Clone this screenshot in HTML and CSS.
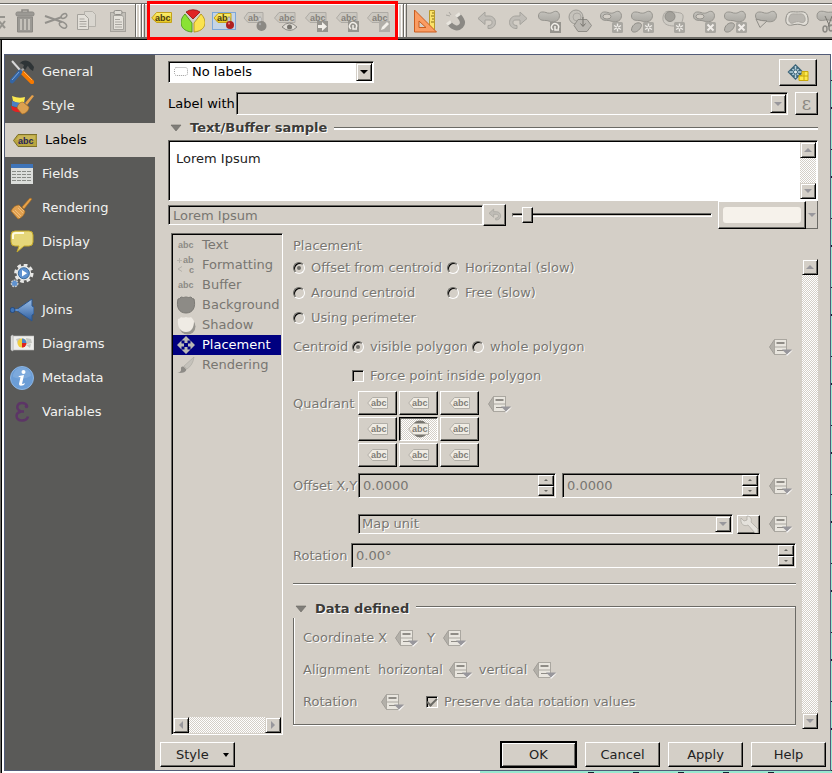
FILE: index.html
```html
<!DOCTYPE html>
<html lang="en">
<head>
<meta charset="utf-8">
<title>Layer Properties</title>
<link rel="stylesheet" href="styles.css">
</head>
<body>
<svg class="defs" aria-hidden="true">
  <defs>
    <linearGradient id="g-blue" x1="0" y1="0" x2="0" y2="1"><stop offset="0" stop-color="#9cbfe8"/><stop offset="1" stop-color="#2c5c9e"/></linearGradient>
    <linearGradient id="g-gray" x1="0" y1="0" x2="0" y2="1"><stop offset="0" stop-color="#c4c2bc"/><stop offset="1" stop-color="#aba9a3"/></linearGradient>
    <linearGradient id="g-tag" x1="0" y1="0" x2="0" y2="1"><stop offset="0" stop-color="#fdf070"/><stop offset="1" stop-color="#e6c61f"/></linearGradient>
  </defs>
</svg>
<svg class="symbols" aria-hidden="true">
  <symbol id="tag-gray" viewBox="0 0 24 24">
    <path d="M.5 9l4.500-5.500h16v10H5z" fill="#cbc8c1" stroke="#aeaba5"/>
    <text x="5" y="12" class="abc" fill="#85827c">abc</text>
  </symbol>
  <symbol id="blob" viewBox="0 0 24 24">
    <path d="M1.500 7c0-5 5-4.500 9-3C16 5 16 1.500 20 2.500c4 2 3 9-2 10-5 1-6-1-9-1-4 0-7.500-.500-7.500-4.500z" fill="url(#g-gray)" stroke="#96948e"/>
  </symbol>
  <symbol id="star" viewBox="0 0 11 11">
    <rect width="11" height="11" rx="1.500" fill="#a9a7a1"/>
    <path d="M5.500 1.500v8M2 3.500l7 4M9 3.500l-7 4" stroke="#f1eeea" stroke-width="1.400"/>
    <circle cx="5.500" cy="5.500" r="1" fill="#a19f99"/>
  </symbol>
  <symbol id="cross" viewBox="0 0 11 11">
    <rect width="11" height="11" rx="1.500" fill="#a9a7a1"/>
    <path d="M2.500 2.500l6 6M8.500 2.500l-6 6" stroke="#f1eeea" stroke-width="2"/>
  </symbol>
  <symbol id="undo" viewBox="0 0 24 24">
    <path d="M3 9.500l7-6.500v4h4c4 0 6.500 3 6.500 6.500s-3 6-6.500 6h-1v-3c3 0 4-1 4-3s-1-2.500-3-2.500h-4v4.500z" fill="#c0bdb7" stroke="#a5a39d"/>
  </symbol>
  <symbol id="dd" viewBox="0 0 24 18">
    <path d="M5.500 1.500v15L.500 9z" fill="#b3b0a9" stroke="#a19e98"/>
    <rect x="5.500" y="1.500" width="12" height="15" fill="#e9e6df" stroke="#aaa7a0"/>
    <path d="M5.500 9h12" stroke="#aaa7a0"/>
    <path d="M7.500 5h8" stroke="#8f8c86" stroke-width="2"/>
    <path d="M8 12.500h7" stroke="#8f8c86"/>
    <path d="M24 12l-5.500 5.500h-1V16z" fill="#fff"/>
    <path d="M13 11.500h10l-5 5z" fill="#98979c"/>
  </symbol>
  <symbol id="down" viewBox="0 0 8 8"><path d="M9 2.500L4.500 7z" fill="#fff"/><path d="M0 2h8L4 6z" fill="#98979c"/></symbol>
  <symbol id="quad" viewBox="0 0 22 14">
    <path d="M.7 7l4.800-5.500h15v11h-15z" fill="#f0ece4" stroke="#b1aea7"/>
    <text x="4" y="10" class="abc" fill="#807d77">abc</text>
  </symbol>
  <symbol id="broom" viewBox="0 0 24 24">
    <path d="M20 2l2 1-8 10-2-2z" fill="#e8a24a" stroke="#a86a1a" stroke-width=".6"/>
    <path d="M9 9l6 6c0 3-3 7-7 8L1 15c2-4 5-6 8-6z" fill="#e0a050" stroke="#a86a1a" stroke-width=".6"/>
    <path d="M9 10l5 5M5 14l6 6M3 15l7 7M8 12l5 5" stroke="#f3c98d" stroke-width=".7"/>
  </symbol>
</svg>

<header class="toolbar">
  <div class="tools tools-edit">
    <svg class="cut" viewBox="18 0 6 24"><path d="M16 8h7M17 12l6 7M23 12l-6 8" stroke="#96948e" stroke-width="2" fill="none"/></svg>
    <svg viewBox="0 0 24 24"><path d="M9 3V1h6v2" fill="none" stroke="#8b8984" stroke-width="1.500"/><rect x="3" y="3" width="18" height="4" rx="1.500" fill="#9b9994" stroke="#8b8984"/><path d="M4.500 8h15v15h-15z" fill="#9b9994" stroke="#8b8984"/><path d="M8 10v11M12 10v11M16 10v11" stroke="#d4cfc7" stroke-width="1.500"/></svg>
    <svg viewBox="0 0 24 24"><path d="M1 7l17 6M1 14l17-6" stroke="#93918c" stroke-width="2"/><ellipse cx="20" cy="7" rx="3" ry="2" transform="rotate(-30 20 7)" fill="none" stroke="#93918c" stroke-width="1.500"/><ellipse cx="19" cy="16" rx="4" ry="2.500" transform="rotate(35 19 16)" fill="none" stroke="#93918c" stroke-width="1.500"/></svg>
    <svg viewBox="0 0 24 24"><path d="M9.500 2.500h8l3 3v12h-11z" fill="#d9d6cf" stroke="#b5b2ab"/><path d="M2.500 5.500h7l4 4v11h-11z" fill="#e3e0d9" stroke="#a5a29c"/><path d="M4.500 10h5M4.500 12.500h7M4.500 15h7M4.500 17.500h7" stroke="#a8a59f"/></svg>
    <svg viewBox="0 0 24 24"><rect x="4.500" y="3.500" width="15" height="19" fill="#c3c0b9" stroke="#a5a29c"/><rect x="8" y="1.500" width="8" height="4" rx="1.500" fill="#dedbd4" stroke="#8f8d88"/><path d="M7.500 6.500h9l1 2v12h-10z" fill="#e5e2db" stroke="#a5a29c"/><path d="M9 10.500h5M9 13h7M9 15.500h7M9 18h7" stroke="#a8a59f"/></svg>
  </div>
  <div class="grip"></div>
  <div class="tools tools-label">
    <svg viewBox="0 0 24 24"><path d="M1.700 9l4.800-5.500h15v10h-15z" fill="url(#g-tag)" stroke="#c4a21a"/><text x="5" y="12" class="abc" fill="#4a3d10">abc</text></svg>
    <svg viewBox="0 0 24 24"><path d="M12 10L5 3a12 12 0 0 1 14 0z" fill="#e02424" stroke="#8e1212" stroke-width=".8"/><path d="M4 5l7 9v9C-1 22-3 12 4 5z" fill="#8ae234" stroke="#3f8a10" stroke-width=".8"/><path d="M20 5l-7 9v9C25 22 27 12 20 5z" fill="#fbe34f" stroke="#ad8c10" stroke-width=".8"/></svg>
    <svg viewBox="0 0 24 24"><rect x=".5" y="3.500" width="23" height="17" fill="#c6d4e4" stroke="#7da7d8"/><path d="M2 9l4-4.500h13v9H6z" fill="url(#g-tag)" stroke="#c4a21a"/><text x="5" y="12" class="abc" fill="#4a3d10">ab</text><path d="M16 14V9q1-3 2 0v4" fill="#eee" stroke="#888" stroke-width=".8"/><circle cx="18" cy="16" r="4" fill="#b01f1f"/><circle cx="17" cy="14.500" r="1" fill="#e88"/></svg>
    <svg viewBox="0 0 24 24"><path d="M1 9l4-5.500h15v10H5z" fill="#cbc8c1" stroke="#aeaba5"/><text x="5" y="12" class="abc" fill="#85827c">ab</text><path d="M16 15V9q1-3 2 0v5" fill="#eee" stroke="#999" stroke-width=".8"/><circle cx="18.500" cy="17" r="5" fill="#8b8984"/><circle cx="17" cy="15" r="1.200" fill="#aaa"/></svg>
    <svg viewBox="0 0 24 24"><use href="#tag-gray"/><path d="M8 18q7-8 15 0-7 7-15 0z" fill="#e0ddd6" stroke="#8b8984"/><circle cx="15.500" cy="18" r="2.500" fill="#77756f"/></svg>
    <svg viewBox="0 0 24 24"><use href="#tag-gray"/><rect x="12" y="12" width="11" height="11" fill="#96948e"/><path d="M13 16h4v-3l5 4.500-5 4.500v-3h-4z" fill="#f3f0ea"/></svg>
    <svg viewBox="0 0 24 24"><use href="#tag-gray"/><rect x="12" y="12" width="11" height="11" fill="#96948e"/><path d="M15 20a3.500 3.500 0 1 1 5-1M17 16v4h4" fill="none" stroke="#f3f0ea" stroke-width="1.500"/></svg>
    <svg viewBox="0 0 24 24"><use href="#tag-gray"/><rect x="12" y="12" width="11" height="11" fill="#b1aea8"/><path d="M14 21l1-3 5-5 2 2-5 5z" fill="#f3f0ea"/></svg>
  </div>
  <div class="grip"></div>
  <div class="tools tools-digitize">
    <svg viewBox="0 0 24 24"><path d="M16.500 1.500h5v19h-5z" fill="#fbe36a" stroke="#b99a2b"/><path d="M19 4h2M18 7h3M19 10h2M18 13h3" stroke="#8a6f10"/><path d="M1.500 1v22h22z" fill="#fb9c62" stroke="#c95c1e"/><path d="M6 12v6.500h7z" fill="#d4cfc7" stroke="#c95c1e"/></svg>
    <svg viewBox="0 0 24 24"><path d="M5 14c5 6 9 6 12 3s1-7-3-11" stroke="#8b8984" stroke-width="5" fill="none"/><path d="M12 7.500l4-3M3 15.500l4-3" stroke="#e9e6df" stroke-width="3"/><path d="M5 3l2 3M2 6l4 1" stroke="#aaa7a1"/></svg>
    <svg viewBox="0 0 24 24"><use href="#undo"/></svg>
    <svg viewBox="0 0 24 24"><use href="#undo" transform="matrix(-1 0 0 1 24 0)"/></svg>
    <svg viewBox="0 0 24 24"><use href="#blob"/><rect x="13" y="13" width="11" height="11" fill="#96948e"/><path d="M16 21a3.500 3.500 0 1 1 5-1M18 17v4h4" fill="none" stroke="#f3f0ea" stroke-width="1.500"/></svg>
    <svg viewBox="0 0 24 24"><circle cx="8" cy="8" r="7" fill="#c5c2bb" stroke="#9c9a94"/><circle cx="9" cy="8" r="4" fill="none" stroke="#aaa7a1"/><path d="M10 10.500h9l4.500 6-4.500 6h-9l-4-6z" fill="#bbb8b2" stroke="#8f8d87"/><path d="M15 8v9M12.500 14.500l2.500 3 2.500-3" fill="none" stroke="#77756f"/></svg>
    <svg viewBox="0 0 24 24"><use href="#blob"/><ellipse cx="8" cy="7.500" rx="4" ry="2.500" fill="#d4cfc7" stroke="#96948e"/><use href="#star" x="13" y="13" width="11" height="11"/></svg>
    <svg viewBox="0 0 24 24"><use href="#blob"/><path d="M1.500 21c0-4 4-8 8-7s1 6-2 8-6 1-6-1z" fill="#b5b3ad" stroke="#8f8d87"/><use href="#star" x="13" y="13" width="11" height="11"/></svg>
    <svg viewBox="0 0 24 24"><path d="M2 8c1-7 6-6 11-5s10 0 9 6-3 8-9 8-12-2-11-9z" fill="#cfccc5" stroke="#aaa7a1"/><circle cx="9" cy="7.500" r="5" fill="#a3a19b" stroke="#8f8d87"/><use href="#star" x="13" y="13" width="11" height="11"/></svg>
    <svg viewBox="0 0 24 24"><use href="#blob"/><ellipse cx="8" cy="7.500" rx="4" ry="2.500" fill="#d4cfc7" stroke="#96948e"/><use href="#cross" x="13" y="13" width="11" height="11"/></svg>
    <svg viewBox="0 0 24 24"><use href="#blob"/><path d="M1.500 21c0-4 4-8 8-7s1 6-2 8-6 1-6-1z" fill="#b5b3ad" stroke="#8f8d87"/><use href="#cross" x="13" y="13" width="11" height="11"/></svg>
    <svg viewBox="0 0 24 24"><use href="#blob"/><path d="M2 10l4 8.500 7-6.500q-6 0-11-2z" fill="#d4cfc7" stroke="#8f8d87"/></svg>
    <svg viewBox="0 0 24 24"><path d="M1 9c1-8 7-6 11-6s10-2 11 6-4 8-6 7-6-1-10 0-7-1-6-7z" fill="#e1ded7" stroke="#8f8d87"/><path d="M4 9c1-5 4-4 8-4s7-1 8 4-3 5-5 4-5 0-7 1-5-1-4-5z" fill="#b9b6b0" stroke="#aaa7a1"/></svg>
    <svg class="clip" viewBox="0 0 16 24"><path d="M1 7c0-6 6-5 9-4s6-1 8 1v8c-4 0-6-2-9-1S1 12 1 7z" fill="url(#g-gray)" stroke="#96948e"/><path d="M9 7l5 11M16 7l-4 11" stroke="#77756f"/><ellipse cx="9" cy="20" rx="2" ry="3" fill="none" stroke="#8b8984" stroke-width="1.500"/><ellipse cx="15" cy="19" rx="2" ry="3" fill="none" stroke="#8b8984" stroke-width="1.500"/></svg>
  </div>
</header>

<div class="workspace">
<div class="dialog">
  <nav class="sidebar">
    <a href="#general"><svg viewBox="0 0 24 24"><path d="M2 1l8 9" stroke="#d8d8d8" stroke-width="2"/><path d="M13 13l9 9" stroke="#f57900" stroke-width="4.500" stroke-linecap="round"/><path d="M14 12l8 8" stroke="#fcaf5a"/><path d="M11 11L17 6" stroke="#aaa" stroke-width="2"/><path d="M10 12l-8 9" stroke="#3465a4" stroke-width="4.500" stroke-linecap="round"/><path d="M9 12l-7 8" stroke="#7fa8dc"/><path d="M9 4c4-5 9-4 12-1l3 4-1 4-3-2-2-3-3 4-2-2 1-3c-2-1-3-2-5-1z" fill="#2e3436"/></svg>General</a>
    <a href="#style"><svg viewBox="0 0 24 24"><path d="M2 2q7 3 13 1l-1 6q-6 1-11-2z" fill="#fce94f"/><path d="M2 7q7 3 13 1l-1 5q-6 1-12-1z" fill="#4b7fc4"/><path d="M1 12q6 3 11 1v5q-6 1-10-2z" fill="#e32222"/><path d="M22 1l2 1-7 9-2-2z" fill="#e8a24a"/><path d="M13 8l6 5c0 4-4 7-7 7l-5-6c1-4 3-6 6-6z" fill="#dca050" stroke="#a86a1a" stroke-width=".6"/></svg>Style</a>
    <a href="#labels" class="current"><svg viewBox="0 0 24 24"><path d="M.500 12.500L5 6.500h19v12H5z" fill="#b9a53f" stroke="#7d7028"/><path d="M3 12l3-4.500h16v4z" fill="#d3c268" opacity=".6"/><text x="5" y="16" class="abc" fill="#27245a">abc</text></svg>Labels</a>
    <a href="#fields"><svg viewBox="0 0 24 24"><rect x="1" y="2" width="22" height="20" fill="#dcdedb"/><rect x="1" y="2" width="22" height="4" fill="#3f74b8"/><path d="M2 9.500h20M2 12.500h20M2 15.500h20M2 18.500h20" stroke="#888b86" stroke-dasharray="4 1"/></svg>Fields</a>
    <a href="#rendering"><svg viewBox="0 0 24 24"><use href="#broom"/></svg>Rendering</a>
    <a href="#display"><svg viewBox="0 0 24 24"><path d="M5 1h14q4 0 4 4v7q0 4-4 4h-5l-7 6 2-6H5q-4 0-4-4V5q0-4 4-4z" fill="#e6d77a" stroke="#c4a92b"/><path d="M3 9V5q0-2 3-2h8" stroke="#fffbe0" stroke-width="2" fill="none"/></svg>Display</a>
    <a href="#actions"><svg viewBox="0 0 24 26"><circle cx="14" cy="10" r="9" fill="none" stroke="#e8e8e6" stroke-width="3" stroke-dasharray="4 3"/><circle cx="14" cy="10" r="8" fill="#e8e8e6"/><circle cx="14" cy="10" r="6" fill="#5f92d0" stroke="#336699"/><path d="M12 6.500l5.500 3.500-5.500 3.500z" fill="#fff"/><circle cx="4" cy="21" r="3.500" fill="#5f92d0" stroke="#c9c9c7" stroke-dasharray="2 1" stroke-width="1.500"/></svg>Actions</a>
    <a href="#joins"><svg viewBox="0 0 24 24"><path d="M6 12L22 1v7l2 1v7l-2 1v6z" fill="url(#g-blue)" stroke="#2b568f"/><path d="M3 12h5" stroke="#5f92d0" stroke-width="2"/><circle cx="2.500" cy="12" r="2.500" fill="#3f74b8" stroke="#24497c"/></svg>Joins</a>
    <a href="#diagrams"><svg viewBox="0 0 24 24"><path d="M1 4l2-1v16l-2-1zM3 4h21v14H3z" fill="#eeeeec" stroke="#bbb" stroke-width=".6"/><path d="M6 7l4-1 2 3-4 3zM16 6l5 1 1 4-5 1zM16 13l5-1-1 4z" fill="#c5c7c2"/><circle cx="12" cy="11" r="4.500" fill="#f2cf3d"/><path d="M12 11V6.500a4.500 4.500 0 0 1 4.500 4.500z" fill="#4b86cc"/><path d="M12 11h4.500a4.500 4.500 0 0 1-4.500 4.500z" fill="#dd2222"/></svg>Diagrams</a>
    <a href="#metadata"><svg viewBox="0 0 24 24"><circle cx="12" cy="12" r="11.500" fill="#6b9dd6" stroke="#8db5e2"/><path d="M3 11a9 9 0 0 1 18-1q-9 5-18 1z" fill="#8db5e2" opacity=".5"/><circle cx="13.500" cy="6" r="2" fill="#fff"/><path d="M9 10l5-1-2 9q1 0 3-1l-1 2q-5 2-5-1l1.500-7H8.500z" fill="#fff"/></svg>Metadata</a>
    <a href="#variables"><svg viewBox="0 0 24 24"><path d="M17 6q-1-3-5-3c-5 0-7 6-1 8.500h3-3c-7 2-5 9 1 9q5 0 6-4" fill="none" stroke="#5c3566" stroke-width="2.500"/><circle cx="16.500" cy="6.500" r="1.800" fill="#5c3566"/></svg>Variables</a>
  </nav>

  <main class="page">
    <div class="mode-row">
      <div class="combo mode">
        <select aria-label="Label mode"><option>No labels</option></select>
        <svg class="mode-icon" viewBox="0 0 14 10"><rect x=".5" y=".5" width="13" height="8" rx="2" fill="none" stroke="#999" stroke-dasharray="1 1"/></svg>
        <span class="arrow active"><svg viewBox="0 0 8 8"><path d="M0 2h8L4 6z"/></svg></span>
      </div>
      <button class="btn auto" type="button" aria-label="Automated placement settings"><svg viewBox="0 0 24 20"><path d="M9.500 1l8 8-8 8-8-8z" fill="#3b6478"/><path d="M9.500 3v12M3.500 9h12M6.500 6l6 6M12.500 6l-6 6" stroke="#b7d2de" stroke-width="1.500"/><circle cx="9.500" cy="9" r="2" fill="#e8eef0" stroke="#3b6478"/><path d="M13 17.500v-5h3V8.500h6v9z" fill="#fce94f" stroke="#c8a80a"/><path d="M13 13h9M18 9v9" stroke="#c8a80a"/></svg></button>
    </div>

    <div class="with-row">
      <label for="with">Label with</label>
      <div class="combo grow"><select id="with" disabled><option></option></select><span class="arrow"><svg><use href="#down"/></svg></span></div>
      <button class="btn expr" type="button" disabled>ε</button>
    </div>

    <h2 class="group-title plain"><svg class="tri" viewBox="0 0 12 8"><path d="M1 1h10L6 7z" fill="#807e79" stroke="#6a6863" stroke-width=".6"/></svg>Text/Buffer sample</h2>

    <div class="sample">
      <textarea aria-label="Sample" readonly>Lorem Ipsum</textarea>
      <div class="scroll"><span class="cap"><svg class="up"><use href="#down"/></svg></span><span class="cap"><svg><use href="#down"/></svg></span></div>
    </div>

    <div class="sample-row">
      <input class="sunken sample-text" type="text" aria-label="Sample text" value="Lorem Ipsum" disabled>
      <button class="btn reset" type="button" disabled aria-label="Reset"><svg viewBox="0 0 24 24"><use href="#undo"/></svg></button>
      <input class="slider" type="range" aria-label="Sample size" min="0" max="100" value="5">
      <div class="color">
        <button class="btn swatch" type="button" aria-label="Background color"><span></span></button>
        <button class="more" type="button" aria-label="Color menu"><svg><use href="#down"/></svg></button>
      </div>
    </div>

    <div class="split">
      <div class="list">
        <ul>
          <li><svg viewBox="0 0 20 20"><text x="2" y="13" class="abc" fill="#8d8b86">abc</text></svg>Text</li>
          <li><svg viewBox="0 0 20 20"><text x="7" y="8" class="abc" fill="#8d8b86">ab</text><text x="13" y="18" class="abc" fill="#8d8b86">c</text><path d="M1 5.500h5M3.500 3v5M6 11.500l-4 2.500 4 2.500" stroke="#b5b2ab" fill="none"/></svg>Formatting</li>
          <li><svg viewBox="0 0 20 20"><text x="2" y="13" class="abc" fill="#8d8b86">abc</text></svg>Buffer</li>
          <li><svg viewBox="0 0 20 20"><path d="M2 4q2 0 3-2 2 1 5 0 3 1 5 0 1 2 3 2c2 8-1 14-8 14S0 12 2 4z" fill="#8d8b86" stroke="#7c7a75"/></svg>Background</li>
          <li><svg viewBox="0 0 20 20"><circle cx="11.500" cy="11.500" r="8" fill="#989690"/><path d="M2 4q2 0 3-2 2 1 5 0 3 1 5 0 2 2 3 4c0 6-2 11-8 11S1 11 2 4z" fill="#efebe4"/></svg>Shadow</li>
          <li class="selected"><svg viewBox="0 0 20 20"><path d="M10 1l4.500 4.500h-3V8h-3V5.500h-3zM10 19l4.500-4.500h-3V12h-3v2.500h-3zM1 10l4.500-4.500v3H8v3H5.500v3zM19 10l-4.500-4.500v3H12v3h2.500v3z" fill="#b9b8b4"/></svg>Placement</li>
          <li><svg viewBox="0 0 20 20"><path d="M18 2L8 11l3 3q6-4 7-12z" fill="#c5c2bb" stroke="#aaa7a1" stroke-width=".6"/><path d="M7.500 11.500l3 3q-1 4-9 3.500 4-1 3.500-4t2.500-2.500z" fill="#8d8b86"/></svg>Rendering</li>
        </ul>
        <div class="scroll horizontal"><span class="cap"><svg class="left"><use href="#down"/></svg></span><span class="cap"><svg class="right"><use href="#down"/></svg></span></div>
      </div>

      <form class="placement">
        <h3>Placement</h3>
        <div class="modes">
          <label><input type="radio" name="mode" checked disabled>Offset from centroid</label>
          <label><input type="radio" name="mode" disabled>Horizontal (slow)</label>
          <label><input type="radio" name="mode" disabled>Around centroid</label>
          <label><input type="radio" name="mode" disabled>Free (slow)</label>
          <label><input type="radio" name="mode" disabled>Using perimeter</label>
        </div>
        <div class="row centroid">
          <span class="name">Centroid</span>
          <label><input type="radio" name="centroid" checked disabled>visible polygon</label>
          <label><input type="radio" name="centroid" disabled>whole polygon</label>
          <svg class="dd last"><use href="#dd"/></svg>
        </div>
        <div class="row force"><label><input type="checkbox" disabled>Force point inside polygon</label></div>
        <div class="row quadrant">
          <span class="name">Quadrant</span>
          <div class="quads">
            <button class="btn" type="button" disabled aria-label="Above left"><svg><use href="#quad"/></svg></button>
            <button class="btn" type="button" disabled aria-label="Above"><svg><use href="#quad"/></svg></button>
            <button class="btn" type="button" disabled aria-label="Above right"><svg><use href="#quad"/></svg></button>
            <button class="btn" type="button" disabled aria-label="Left"><svg><use href="#quad"/></svg></button>
            <button class="btn pressed" type="button" disabled aria-label="Over"><svg class="over" viewBox="0 0 22 18"><circle cx="12" cy="9" r="8.500" fill="#77756f"/><use href="#quad" y="2" width="22" height="14"/></svg></button>
            <button class="btn" type="button" disabled aria-label="Right"><svg><use href="#quad"/></svg></button>
            <button class="btn" type="button" disabled aria-label="Below left"><svg><use href="#quad"/></svg></button>
            <button class="btn" type="button" disabled aria-label="Below"><svg><use href="#quad"/></svg></button>
            <button class="btn" type="button" disabled aria-label="Below right"><svg><use href="#quad"/></svg></button>
          </div>
          <svg class="dd"><use href="#dd"/></svg>
        </div>
        <div class="row offset">
          <label class="name" for="ox">Offset X,Y</label>
          <div class="spin"><input id="ox" type="text" value="0.0000" disabled><span class="steps"><button type="button" disabled aria-label="Increase"></button><button type="button" disabled aria-label="Decrease"></button></span></div>
          <div class="spin"><input aria-label="Offset Y" type="text" value="0.0000" disabled><span class="steps"><button type="button" disabled aria-label="Increase"></button><button type="button" disabled aria-label="Decrease"></button></span></div>
          <svg class="dd last"><use href="#dd"/></svg>
        </div>
        <div class="row unit">
          <div class="combo grow"><select aria-label="Offset unit" disabled><option>Map unit</option></select><span class="arrow"><svg><use href="#down"/></svg></span></div>
          <button class="btn wrench" type="button" disabled aria-label="Unit settings"><svg viewBox="0 0 20 18"><path d="M2 3l3 3 3-1V1c4 0 5 4 4 6l7 7v4h-3L9 10C5 12 1 9 2 3z" fill="#e4e1db" stroke="#aaa7a1" stroke-width=".7"/></svg></button>
          <svg class="dd last"><use href="#dd"/></svg>
        </div>
        <div class="row rotation">
          <label for="rot">Rotation</label>
          <div class="spin"><input id="rot" type="text" value="0.00°" disabled><span class="steps"><button type="button" disabled aria-label="Increase"></button><button type="button" disabled aria-label="Decrease"></button></span></div>
        </div>
        <hr>
        <h2 class="group-title boxed"><svg class="tri" viewBox="0 0 12 8"><path d="M1 1h10L6 7z" fill="#807e79" stroke="#6a6863" stroke-width=".6"/></svg>Data defined</h2>
        <div class="defined">
          <div class="row"><span class="name">Coordinate</span><span>X</span><svg class="dd"><use href="#dd"/></svg><span>Y</span><svg class="dd"><use href="#dd"/></svg></div>
          <div class="row align"><span class="name">Alignment</span><span>horizontal</span><svg class="dd"><use href="#dd"/></svg><span>vertical</span><svg class="dd"><use href="#dd"/></svg></div>
          <div class="row"><span class="name">Rotation</span><svg class="dd first"><use href="#dd"/></svg><label class="keep"><input type="checkbox" checked disabled>Preserve data rotation values</label></div>
        </div>
      </form>

      <div class="scroll page-scroll"><span class="cap"><svg class="up"><use href="#down"/></svg></span><span class="cap"><svg><use href="#down"/></svg></span></div>
    </div>

    <footer class="actions">
      <button class="btn style-menu" type="button">Style<svg viewBox="0 0 6 4"><path d="M0 0h6L3 4z"/></svg></button>
      <button class="btn default" type="button">OK</button>
      <button class="btn" type="button">Cancel</button>
      <button class="btn" type="button">Apply</button>
      <button class="btn" type="button">Help</button>
    </footer>
  </main>
</div>
</div>
</body>
</html>
```
FILE: styles.css
```css
:root {
  --face: #d4cfc7;
  --shade: #6b6a65;
  --dim: #787671;
  --edge: #525c78;
  --map: #98e8d0;
}

* { box-sizing: border-box; }

body {
  margin: 0;
  min-height: 100vh;
  display: flex;
  flex-direction: column;
  background: #fff;
  color: #000;
  font: 13px/18px "DejaVu Sans", sans-serif;
}

button, input, select, textarea { font: inherit; color: inherit; margin: 0; }
svg { display: block; flex: none; }
.defs { position: absolute; width: 0; height: 0; }
.symbols { display: none; }
.abc { font: bold 9px "Liberation Sans", sans-serif; text-shadow: none; }

/* Toolbar */
.toolbar {
  display: flex;
  height: 40px;
  overflow: hidden;
  background: linear-gradient(var(--face) 3px, var(--shade) 3px 4px, #fff 4px 5px, var(--face) 5px 37px, var(--shade) 37px 39px, #000 39px);
}
.tools { display: flex; align-items: center; gap: 7px; flex: none; }
.tools svg { width: 24px; height: 24px; }
.tools svg.cut { width: 6px; }
.tools svg.clip { width: 16px; }
.tools-edit, .tools-digitize { padding-top: 2px; }
.tools-edit { padding-right: 5px; }
.tools-label { margin-top: 1px; height: 39px; border: 3px solid #f00; padding: 1px 4px 0 0; }
.grip {
  flex: none;
  width: 12px;
  margin: 4px 0 3px;
  border-left: 1px solid var(--shade);
  background:
    linear-gradient(90deg, #fff 1px, transparent 1px 3px, #fff 3px 4px, transparent 4px 5px, var(--shade) 5px 6px, #fff 6px 7px, transparent 7px 8px, var(--shade) 8px 9px, transparent 9px);
}
.tools-label + .grip { width: 15px; border-left: 0; }

/* Window */
.workspace {
  flex: 1;
  display: flex;
  padding: 14px 1px 2px 3px;
  border-left: 1px solid var(--shade);
  box-shadow: inset 1px 0 #000;
  background:
    repeating-linear-gradient(transparent 0 40px, #123 40px 41px, transparent 41px 67px, #123 67px 69px) right / 1px 100% no-repeat,
    linear-gradient(#fff 30px, var(--map) 30px) right / 1px 100% no-repeat,
    repeating-linear-gradient(90deg, transparent 0 32px, #123 32px 38px, transparent 38px 45px) 555px 100% / 250px 1px no-repeat,
    linear-gradient(90deg, transparent 479px, var(--map) 479px) bottom / 100% 2px no-repeat,
    #fff;
}
.dialog { flex: 1; display: flex; border: 1px solid var(--edge); background: var(--face); }

/* Sidebar */
.sidebar { flex: none; width: 150px; background: #5a5a58; }
.sidebar a {
  display: flex;
  align-items: center;
  gap: 8px;
  height: 34px;
  padding-left: 5px;
  color: #f2f2f0;
  text-decoration: none;
}
.sidebar svg { width: 24px; height: 24px; }
.sidebar .current { padding-left: 8px; background: var(--face); color: #000; }

/* Bevels */
.btn {
  display: flex;
  align-items: center;
  justify-content: center;
  padding: 0;
  border: 1px solid;
  border-color: #fff #000 #000 #fff;
  background: var(--face);
  box-shadow: inset -1px -1px var(--shade);
}
.sunken, .combo, .spin, .sample {
  border: 1px solid;
  border-color: var(--shade) #fff #fff var(--shade);
  box-shadow: inset 1px 1px #000;
}

/* Combo boxes */
.combo { display: grid; height: 23px; }
.combo > * { grid-area: 1 / 1; }
.combo select { appearance: none; border: 0; background: none; padding: 0 20px 0 3px; width: 100%; min-width: 0; opacity: 1; }
.combo select:disabled { color: var(--dim); text-shadow: 1px 1px #fff; }
.arrow, .cap {
  display: grid;
  place-items: center;
  width: 16px;
  border: 1px solid;
  border-color: var(--face) #000 #000 var(--face);
  box-shadow: inset 1px 1px #fff, inset -1px -1px var(--shade);
  background: var(--face);
}
.arrow { justify-self: end; margin: 1px 1px 1px 0; pointer-events: none; }
.arrow svg, .cap svg { width: 8px; height: 8px; overflow: visible; }
.cap { height: 16px; }
.up { transform: rotate(180deg); }
.left { transform: rotate(90deg); }
.right { transform: rotate(-90deg); }

.mode { width: 206px; height: 22px; margin-top: 2px; background: #fff; }
.mode select { padding-left: 23px; }
.mode-icon { width: 14px; height: 10px; align-self: center; margin-left: 5px; }

/* Page */
.page { flex: 1; min-width: 0; display: flex; flex-direction: column; padding-top: 4px; }
.page > * { margin-left: 13px; margin-right: 12px; }
.mode-row { display: flex; align-items: flex-start; justify-content: space-between; height: 27px; padding-right: 1px; }
.auto { width: 38px; height: 27px; }
.auto svg { width: 24px; height: 20px; }
.with-row { display: flex; align-items: center; margin-top: 6px; }
.with-row label { flex: none; width: 68px; }
.grow { flex: 1; min-width: 0; }
.expr { width: 23px; height: 23px; margin-left: 7px; font: 18px/18px "DejaVu Serif", serif; color: #8a8781; }

.group-title {
  display: flex;
  align-items: center;
  gap: 7px;
  margin-bottom: 0;
  font-size: 13px;
  line-height: 18px;
  color: #3c3b38;
  text-shadow: 1px 1px #fff;
}
.group-title::after { content: ""; flex: 1; height: 2px; border-top: 1px solid var(--shade); background: #fff; }
.tri { width: 12px; height: 8px; margin: 0 1px 0 2px; }
.plain { margin-top: 4px; }

.sample { display: flex; height: 61px; margin-top: 3px; background: #fff; }
.sample textarea { flex: 1; min-width: 0; border: 0; margin: 1px 0 0 1px; padding: 8px 6px; resize: none; background: none; outline: 0; overflow: hidden; color: #222; }

.scroll {
  display: flex;
  flex-direction: column;
  justify-content: space-between;
  flex: none;
  width: 16px;
  background: repeating-conic-gradient(#fff 0 25%, var(--face) 0 50%) 0 0 / 2px 2px;
}
.sample .scroll { margin: 1px 1px 1px 0; }
.horizontal { flex-direction: row; width: auto; }

.sample-row { display: flex; align-items: center; height: 28px; }
.sample-text { flex: 1; min-width: 0; height: 20px; padding: 0 4px; background: var(--face); }
.sample-text:disabled { color: var(--dim); }
.reset { width: 23px; height: 22px; }
.reset svg { width: 16px; height: 16px; }
.slider { appearance: none; width: 200px; height: 18px; margin: 0 6px; background: none; }
.slider::-webkit-slider-runnable-track { height: 4px; border: 1px solid; border-color: var(--shade) #fff #fff var(--shade); background: linear-gradient(#000 1px, var(--face) 1px); }
.slider::-webkit-slider-thumb { appearance: none; width: 11px; height: 16px; margin-top: -7px; border: 1px solid; border-color: #fff #000 #000 #fff; box-shadow: inset -1px -1px var(--shade); background: var(--face); }
.color { display: flex; align-self: stretch; }
.swatch { width: 88px; }
.swatch span { width: 78px; height: 16px; border-radius: 3px; background: #f6f2eb; }
.more { width: 12px; padding: 0; border: 0; border-right: 1px solid var(--shade); border-bottom: 1px solid var(--shade); background: none; }
.more svg { width: 8px; height: 8px; margin: 0 auto; overflow: visible; }

/* List */
.split { flex: 1; display: flex; margin-top: 4px; }
.list {
  flex: none;
  width: 112px;
  margin-left: 3px;
  display: flex;
  flex-direction: column;
  justify-content: space-between;
  border: 1px solid;
  border-color: var(--shade) #fff #fff var(--shade);
  box-shadow: inset 1px 1px #000;
  padding: 1px;
  color: var(--dim);
}
.list ul { list-style: none; margin: 0; padding: 0; }
.list li { display: flex; align-items: center; gap: 6px; height: 20px; padding-left: 3px; white-space: nowrap; }
.list li svg { width: 20px; height: 20px; }
.list .selected { background: #000080; color: #fff; }

/* Placement form */
.placement {
  flex: 1;
  min-width: 0;
  margin-left: 10px;
  padding-top: 4px;
  color: var(--dim);
  text-shadow: 1px 1px #fff;
}
h3 { margin: 0; font-size: 13px; font-weight: normal; }
.placement label { display: flex; align-items: center; gap: 6px; }
.placement input[type="radio"], .placement input[type="checkbox"] {
  appearance: none;
  flex: none;
  display: grid;
  place-items: center;
  width: 12px;
  height: 12px;
  border: 1px solid;
  border-color: var(--shade) #fff #fff var(--shade);
  box-shadow: inset 1px 1px #000;
}
.placement input[type="radio"] { border-radius: 50%; }
.placement input[type="radio"]:checked::before { content: ""; width: 4px; height: 4px; border-radius: 50%; background: var(--shade); }
.placement input[type="checkbox"]:checked::before { content: ""; width: 8px; height: 4px; margin-bottom: 2px; border: 2px solid var(--shade); border-width: 0 0 2px 2px; transform: rotate(-45deg); }
.modes { display: grid; grid-template-columns: 154px 1fr; grid-auto-rows: 25px; }

.row { display: flex; align-items: center; }
.dd { width: 24px; height: 18px; }
.last { margin: 0 3px 0 auto; }
.centroid { height: 30px; margin-top: 2px; }
.centroid .name { width: 59px; }
.centroid .name + label { width: 120px; }
.force { height: 28px; padding-left: 59px; }
.quadrant { align-items: flex-start; margin-top: 1px; }
.quadrant .name, .offset .name { flex: none; width: 65px; }
.quadrant .name { margin-top: 4px; }
.quadrant .dd { margin: 4px 0 0 9px; }
.quads { display: grid; grid-template-columns: repeat(3, 39px); grid-auto-rows: 24px; gap: 2px; }
.quads svg { width: 22px; height: 14px; }
.quads svg.over { height: 18px; }
.quads .pressed { border-color: #000 #fff #fff #000; box-shadow: inset 1px 1px var(--shade); background: repeating-conic-gradient(#fff 0 25%, var(--face) 0 50%) 0 0 / 2px 2px; }

.spin { flex: 1; min-width: 0; display: flex; height: 25px; }
.spin input { flex: 1; min-width: 0; border: 0; background: none; padding: 0 4px; color: var(--dim); }
.steps { display: grid; grid-template-rows: 1fr 1fr; width: 16px; margin: 1px 1px 1px 0; }
.steps button {
  display: grid;
  place-items: center;
  padding: 0;
  border: 1px solid;
  border-color: #fff #000 #000 #fff;
  box-shadow: inset -1px -1px var(--shade);
  background: var(--face);
}
.steps button::before { content: ""; border: 2px solid transparent; border-top: 0; border-bottom-color: var(--shade); }
.steps button + button::before { transform: rotate(180deg); }
.offset { margin-top: 6px; }
.offset .spin + .spin { margin-left: 6px; }
.offset .last, .unit .last { margin-left: 9px; }
.unit { margin-top: 16px; padding-left: 65px; }
.unit .combo { height: 20px; }
.wrench { width: 23px; height: 19px; margin-left: 4px; }
.wrench svg { width: 20px; height: 18px; }
.rotation { margin-top: 9px; }
.rotation label { flex: none; width: 58px; }
hr { margin: 15px 0; height: 2px; border: 0; border-top: 1px solid var(--shade); background: #fff; }

.boxed { margin-top: 0; }
.boxed::after { align-self: flex-end; height: 11px; border-right: 1px solid var(--shade); background: linear-gradient(#fff 1px, transparent 1px); }
.defined { padding: 4px 9px 6px; border: 1px solid var(--shade); border-top: 0; box-shadow: 0 1px #fff, inset 1px 0 #fff; }
.defined .row { height: 32px; gap: 8px; }
.defined .align { gap: 6px; }
.defined .name { width: 67px; }
.defined .align .name { width: 69px; }
.defined .first { margin-left: 3px; }
.defined .keep { margin-left: 13px; }

.page-scroll { margin: 26px 0 6px 6px; }

/* Footer */
.page > .actions { display: flex; align-items: center; gap: 8px; margin: 6px 4px 2px 5px; height: 27px; }
.actions .btn { width: 75px; height: 25px; color: #222; }
.actions .style-menu { justify-content: space-between; padding: 0 5px 0 15px; margin-right: auto; }
.style-menu svg { width: 6px; height: 4px; }
.actions .default { width: 77px; height: 27px; border: 2px solid #000; box-shadow: inset 1px 1px #fff, inset -1px -1px var(--shade); }
```
